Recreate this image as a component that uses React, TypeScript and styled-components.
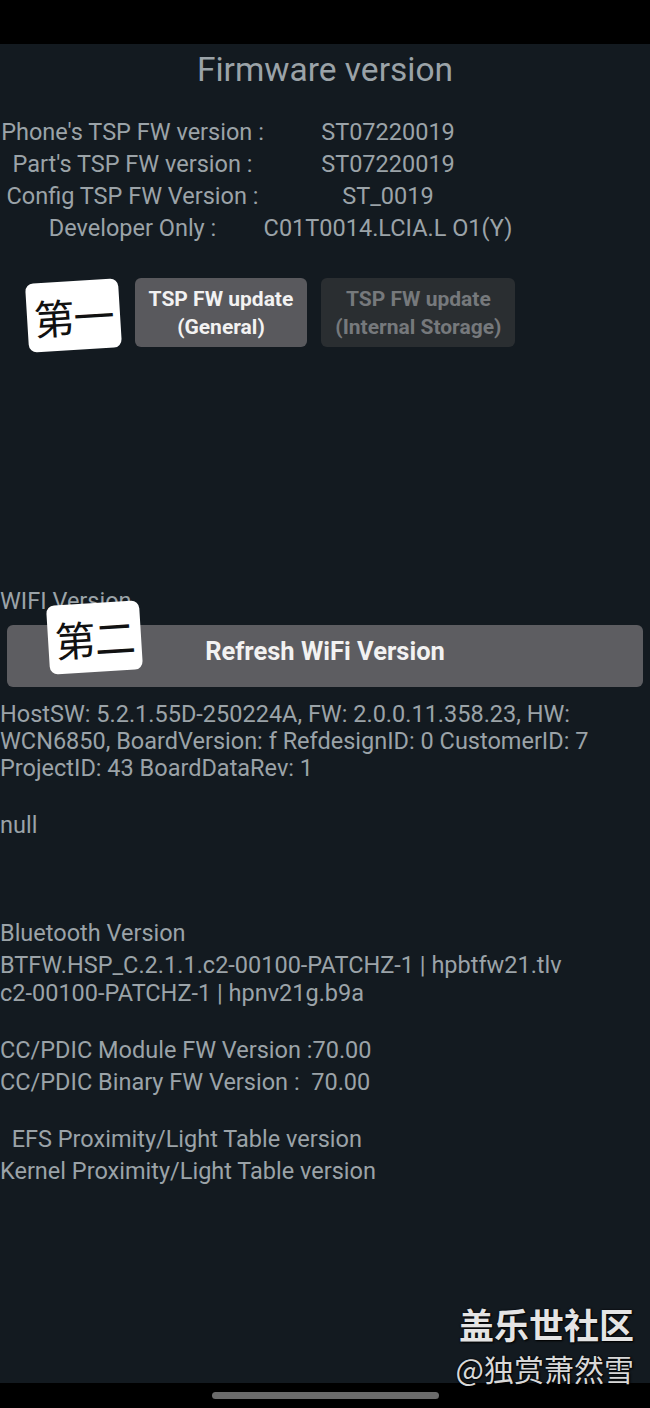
import React from "react";
import styled, { createGlobalStyle } from "styled-components";

const Global = createGlobalStyle`
  html, body {
    margin: 0;
    padding: 0;
    background: #000;
  }
  * {
    box-sizing: border-box;
  }
`;

const Page = styled.div`
  position: relative;
  width: 650px;
  height: 1408px;
  display: flex;
  flex-direction: column;
  background: #000;
  font-family: Roboto, "Noto Sans", sans-serif;
  overflow: hidden;
`;

const StatusBar = styled.div`
  height: 44px;
  flex: none;
  background: #000;
`;

const Screen = styled.div`
  flex: 1;
  display: flex;
  flex-direction: column;
  background: #131a20;
  color: #9ba3a8;
`;

const Title = styled.h1`
  margin: 8px 0 0;
  text-align: center;
  font-size: 33.5px;
  font-weight: 400;
  line-height: 36px;
  color: #9ba3a8;
`;

const InfoGrid = styled.div`
  margin-top: 28px;
  display: grid;
  grid-template-columns: 265px 246px;
  font-size: 23.5px;
  line-height: 32px;
  white-space: nowrap;
`;

const Cell = styled.div`
  display: flex;
  justify-content: center;
`;

const ButtonRow = styled.div`
  position: relative;
  margin-top: 34px;
  display: flex;
  justify-content: center;
  gap: 14px;
`;

const UpdateButton = styled.button<{ $enabled: boolean }>`
  appearance: none;
  border: none;
  height: 69px;
  padding: 0 14px;
  border-radius: 6px;
  font-family: Roboto, "Noto Sans", sans-serif;
  font-size: 21px;
  font-weight: 700;
  line-height: 28px;
  background: ${({ $enabled }) => ($enabled ? "#59595d" : "#2a2e31")};
  color: ${({ $enabled }) => ($enabled ? "#f2f2f2" : "#76797c")};
`;

const Sticker = styled.div<{ $left: number; $top: number }>`
  position: absolute;
  left: ${({ $left }) => $left}px;
  top: ${({ $top }) => $top}px;
  width: 93px;
  height: 69px;
  background: #fff;
  border-radius: 8px;
  transform: rotate(-3.5deg);
  display: flex;
  align-items: center;
  justify-content: center;
  color: #111;
  font-family: "Noto Sans CJK SC", sans-serif;
  font-size: 41px;
  font-weight: 400;
  line-height: 1;
  letter-spacing: -1px;
  z-index: 2;
`;

const Spacer = styled.div`
  height: 240px;
`;

const WifiSection = styled.div`
  position: relative;
  display: flex;
  flex-direction: column;
`;

const SectionLabel = styled.div`
  font-size: 23.5px;
  line-height: 28px;
`;

const RefreshButton = styled.button`
  appearance: none;
  border: none;
  margin: 10px 7px 0;
  height: 62px;
  padding: 0 0 10px;
  border-radius: 6px;
  background: #5d5d61;
  color: #f2f2f2;
  font-family: Roboto, "Noto Sans", sans-serif;
  font-size: 25.5px;
  font-weight: 700;
`;

const Paragraph = styled.div<{ $mt: number; $lh: number }>`
  margin-top: ${({ $mt }) => $mt}px;
  font-size: 23.5px;
  line-height: ${({ $lh }) => $lh}px;
  white-space: pre;
`;

const Group = styled.div<{ $mt: number }>`
  margin-top: ${({ $mt }) => $mt}px;
  display: flex;
  flex-direction: column;
  gap: 4px;
  font-size: 23.5px;
  line-height: 28px;
  white-space: pre;
`;

const NavBar = styled.div`
  height: 25px;
  flex: none;
  background: #000;
  display: flex;
  justify-content: center;
  padding-top: 9px;
`;

const NavPill = styled.div`
  width: 227px;
  height: 7px;
  border-radius: 4px;
  background: #6b6b6b;
`;

const Watermark = styled.div`
  position: absolute;
  right: 16px;
  bottom: 24px;
  display: flex;
  flex-direction: column;
  align-items: flex-end;
  gap: 10px;
  font-family: "Noto Sans CJK SC", sans-serif;
  color: #e4e4e4;
  text-shadow: 0 0 2px #000, 1px 1px 2px #000;
  z-index: 3;
`;

const WatermarkTitle = styled.div`
  font-size: 35px;
  font-weight: 700;
  line-height: 36px;
`;

const WatermarkUser = styled.div`
  font-size: 30px;
  font-weight: 400;
  line-height: 32px;
  color: #d8d8d8;
`;

const rows: [string, string][] = [
  ["Phone's TSP FW version :", "ST07220019"],
  ["Part's TSP FW version :", "ST07220019"],
  ["Config TSP FW Version :", "ST_0019"],
  ["Developer Only :", "C01T0014.LCIA.L O1(Y)"],
];

export default function App() {
  return (
    <Page>
      <Global />
      <StatusBar />
      <Screen>
        <Title>Firmware version</Title>
        <InfoGrid>
          {rows.map(([label, value]) => (
            <React.Fragment key={label}>
              <Cell>{label}</Cell>
              <Cell>{value}</Cell>
            </React.Fragment>
          ))}
        </InfoGrid>

        <ButtonRow>
          <Sticker $left={27} $top={3}>第一</Sticker>
          <UpdateButton $enabled>
            TSP FW update
            <br />
            (General)
          </UpdateButton>
          <UpdateButton $enabled={false}>
            TSP FW update
            <br />
            (Internal Storage)
          </UpdateButton>
        </ButtonRow>

        <Spacer />

        <WifiSection>
          <SectionLabel>WIFI Version</SectionLabel>
          <Sticker $left={48} $top={16}>第二</Sticker>
          <RefreshButton>Refresh WiFi Version</RefreshButton>
        </WifiSection>

        <Paragraph $mt={14} $lh={27}>
          {"HostSW: 5.2.1.55D-250224A, FW: 2.0.0.11.358.23, HW:\nWCN6850, BoardVersion: f RefdesignID: 0 CustomerID: 7\nProjectID: 43 BoardDataRev: 1"}
        </Paragraph>
        <Paragraph $mt={29} $lh={28}>null</Paragraph>

        <Group $mt={80}>
          <div>Bluetooth Version</div>
          <div>
            {"BTFW.HSP_C.2.1.1.c2-00100-PATCHZ-1 | hpbtfw21.tlv"}
            <br />
            {"c2-00100-PATCHZ-1 | hpnv21g.b9a"}
          </div>
        </Group>

        <Group $mt={29}>
          <div>CC/PDIC Module FW Version :70.00</div>
          <div>{"CC/PDIC Binary FW Version :  70.00"}</div>
        </Group>

        <Group $mt={29}>
          <div>{"  EFS Proximity/Light Table version"}</div>
          <div>Kernel Proximity/Light Table version</div>
        </Group>
      </Screen>
      <NavBar>
        <NavPill />
      </NavBar>
      <Watermark>
        <WatermarkTitle>盖乐世社区</WatermarkTitle>
        <WatermarkUser>@独赏萧然雪</WatermarkUser>
      </Watermark>
    </Page>
  );
}
